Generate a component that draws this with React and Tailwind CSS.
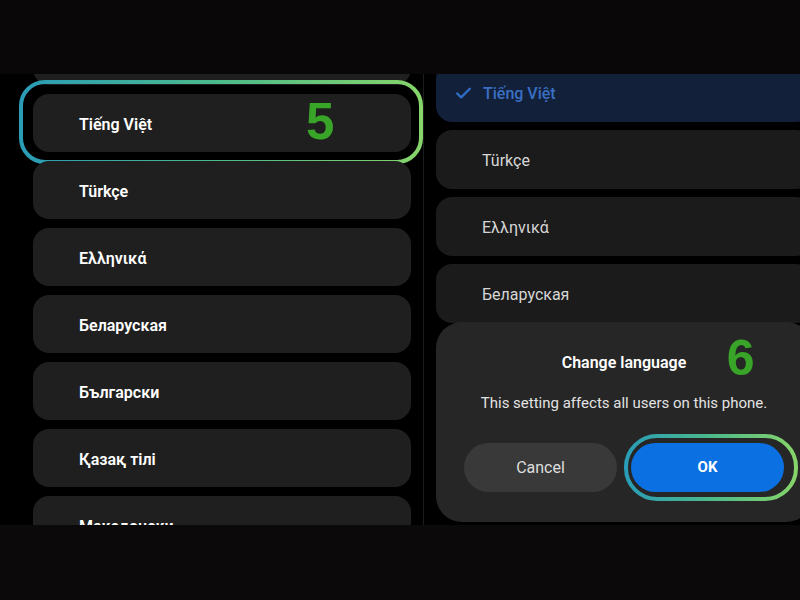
import { Check } from "lucide-react";

// first entry scrolls mostly out of view, so it has no label
const leftItems = [
  "",
  "Tiếng Việt",
  "Türkçe",
  "Ελληνικά",
  "Беларуская",
  "Български",
  "Қазақ тілі",
  "Македонски",
];

const rightItems = ["Türkçe", "Ελληνικά", "Беларуская"];

/* ── gradient outline used to call out a step ───────── */
function StepRing({ w, h, r, id }) {
  return (
    <svg width={w} height={h} className="block">
      <defs>
        <linearGradient id={id} x1="0" y1="0" x2="1" y2="0">
          <stop offset="0" stopColor="#2a9cb6" />
          <stop offset="0.5" stopColor="#4cba8a" />
          <stop offset="1" stopColor="#86d46a" />
        </linearGradient>
      </defs>
      <rect
        x="2"
        y="2"
        width={w - 4}
        height={h - 4}
        rx={r}
        fill="none"
        stroke={`url(#${id})`}
        strokeWidth="4"
      />
    </svg>
  );
}

/* ── left: language list ───────────────────────────── */
function LeftPanel() {
  return (
    <div className="w-[423px] h-full overflow-hidden bg-black">
      <div className="flex flex-col gap-[9px] pl-[33px] pr-[12px] -mt-[47px]">
        {leftItems.map((name, i) => (
          <div key={i} className="relative">
            <div className="h-[58px] rounded-[16px] bg-[#1f1f1f] pl-[46px] pt-[3px] flex items-center text-[16px] font-semibold text-white">
              {name}
            </div>
            {name === "Tiếng Việt" && (
              <>
                <div className="absolute -left-[14px] -top-[14px]">
                  <StepRing w={404} h={84} r={24} id="ring5" />
                </div>
                <span className="absolute left-[273px] top-[-6px] text-[51px] leading-[68px] font-bold text-[#38a428] font-['Liberation_Sans',sans-serif]">
                  5
                </span>
              </>
            )}
          </div>
        ))}
      </div>
    </div>
  );
}

/* ── right: list with confirm sheet ────────────────── */
function RightPanel() {
  return (
    <div className="relative flex-1 h-full overflow-hidden bg-black pl-[12px]">
      <div className="flex flex-col gap-[8px] -mt-[11px]">
        <div className="w-[376px] h-[59px] rounded-[16px] bg-[#12203a] flex items-center pl-[18px] gap-[10px] pt-[2px]">
          <Check className="w-[19px] h-[19px] text-[#2f6cc4]" strokeWidth={3} />
          <span className="text-[16px] font-medium text-[#3a6fc2]">Tiếng Việt</span>
        </div>
        {rightItems.map((name) => (
          <div
            key={name}
            className="w-[376px] h-[59px] rounded-[16px] bg-[#1b1b1b] pl-[46px] pt-[2px] flex items-center text-[16px] text-[#d6d6d6]"
          >
            {name}
          </div>
        ))}
      </div>

      <div className="absolute left-[12px] top-[248px] w-[376px] h-[200px] rounded-[26px] bg-[#262626] flex flex-col items-center pt-[29px]">
        <div className="relative">
          <h2 className="text-[16px] font-semibold text-white leading-[24px]">Change language</h2>
          <span className="absolute left-[165px] top-[-28px] text-[50px] leading-[70px] font-bold text-[#38a428] font-['Liberation_Sans',sans-serif]">
            6
          </span>
        </div>
        <p className="mt-[18px] text-[15px] text-[#e2e2e2] leading-[20px]">
          This setting affects all users on this phone.
        </p>
        <div className="mt-[30px] flex gap-[14px]">
          <button className="w-[153px] h-[49px] rounded-full bg-[#393939] text-[16px] text-[#dedede]">
            Cancel
          </button>
          <div className="relative">
            <button className="w-[153px] h-[49px] rounded-full bg-[#0b70e1] text-[15px] font-bold text-white">
              OK
            </button>
            <div className="absolute -left-[7px] -top-[9px]">
              <StepRing w={174} h={67} r={31} id="ring6" />
            </div>
          </div>
        </div>
      </div>
    </div>
  );
}

export default function App() {
  return (
    <div className="w-[800px] h-[600px] flex flex-col bg-[#0a0708] font-['Roboto',sans-serif]">
      <div className="h-[74px] bg-[#0a0708]" />
      <div className="h-[451px] flex">
        <LeftPanel />
        <div className="w-px h-full bg-[#1c1c1c]" />
        <RightPanel />
      </div>
      <div className="h-[75px] bg-[#0b090a]" />
    </div>
  );
}
